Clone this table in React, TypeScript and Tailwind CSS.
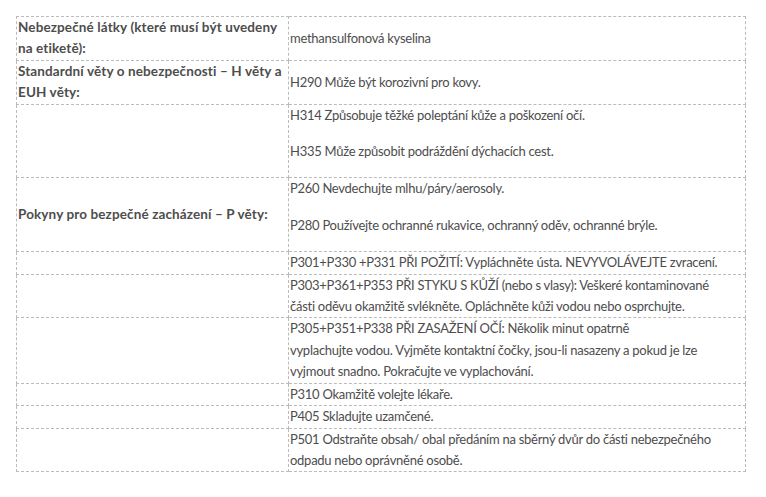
const rows: { label?: string[]; items: string[][] }[] = [
  {
    label: ["Nebezpečné látky (které musí být uvedeny", "na etiketě):"],
    items: [["methansulfonová kyselina"]],
  },
  {
    label: ["Standardní věty o nebezpečnosti – H věty a", "EUH věty:"],
    items: [["H290 Může být korozivní pro kovy."]],
  },
  {
    items: [
      ["H314 Způsobuje těžké poleptání kůže a poškození očí."],
      ["H335 Může způsobit podráždění dýchacích cest."],
    ],
  },
  {
    label: ["Pokyny pro bezpečné zacházení – P věty:"],
    items: [
      ["P260 Nevdechujte mlhu/páry/aerosoly."],
      ["P280 Používejte ochranné rukavice, ochranný oděv, ochranné brýle."],
    ],
  },
  {
    items: [["P301+P330 +P331 PŘI POŽITÍ: Vypláchněte ústa. NEVYVOLÁVEJTE zvracení."]],
  },
  {
    items: [
      [
        "P303+P361+P353 PŘI STYKU S KŮŽÍ (nebo s vlasy): Veškeré kontaminované",
        "části oděvu okamžitě svlékněte. Opláchněte kůži vodou nebo osprchujte.",
      ],
    ],
  },
  {
    items: [
      [
        "P305+P351+P338 PŘI ZASAŽENÍ OČÍ: Několik minut opatrně",
        "vyplachujte vodou. Vyjměte kontaktní čočky, jsou-li nasazeny a pokud je lze",
        "vyjmout snadno. Pokračujte ve vyplachování.",
      ],
    ],
  },
  { items: [["P310 Okamžitě volejte lékaře."]] },
  { items: [["P405 Skladujte uzamčené."]] },
  {
    items: [
      [
        "P501 Odstraňte obsah/ obal předáním na sběrný dvůr do části nebezpečného",
        "odpadu nebo oprávněné osobě.",
      ],
    ],
  },
];

const Lines = ({ lines }: { lines: string[] }) => (
  <>
    {lines.map((line, i) => (
      <span key={i}>
        {line}
        {i < lines.length - 1 && <br />}
      </span>
    ))}
  </>
);

const App = () => {
  return (
    <div className="bg-white min-h-[497px] p-4 font-['Lato',sans-serif] text-[13px] tracking-[-0.27px] leading-[21.4px] text-[#4d4d4d]">
      <table className="w-[730px] border-collapse table-fixed">
        <colgroup>
          <col className="w-[272px]" />
          <col />
        </colgroup>
        <tbody>
          {rows.map((row, i) => (
            <tr key={i}>
              <td className="border border-dashed border-[#bbb] px-px py-0 align-middle font-bold text-[13.5px] tracking-[0.12px] whitespace-nowrap">
                {row.label && <Lines lines={row.label} />}
              </td>
              <td className="border border-dashed border-[#bbb] px-px py-0 align-middle whitespace-nowrap">
                {row.items.length > 1
                  ? row.items.map((p, j) => (
                      <p key={j} className="mb-[15px]">
                        <Lines lines={p} />
                      </p>
                    ))
                  : <Lines lines={row.items[0]} />}
              </td>
            </tr>
          ))}
        </tbody>
      </table>
    </div>
  );
};

export default App;
